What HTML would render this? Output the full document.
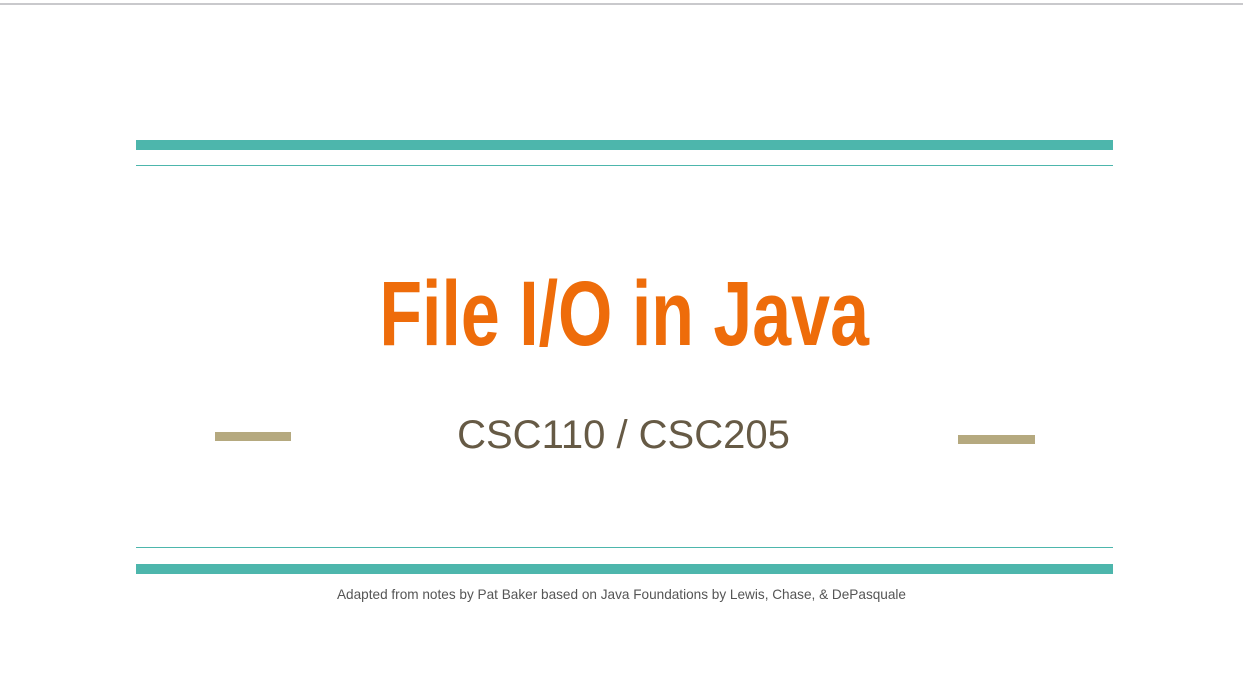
<!DOCTYPE html>
<html><head><meta charset="utf-8"><style>
html,body{margin:0;padding:0;width:1243px;height:699px;background:#fff;overflow:hidden;position:relative;font-family:"Liberation Sans",sans-serif}
div{position:absolute}
.teal{background:#4db6ac}
</style></head><body>
<div style="left:0;top:3px;width:1243px;height:2px;background:#c9c9cc"></div>
<div class="teal" style="left:136px;top:140px;width:977px;height:10px"></div>
<div style="left:136px;top:165px;width:977px;height:0;border-top:1px solid #4db6ac"></div>
<div style="left:136px;top:547px;width:977px;height:0;border-top:1px solid #4db6ac"></div>
<div class="teal" style="left:136px;top:564px;width:977px;height:10px"></div>
<div style="left:215px;top:432px;width:76px;height:9px;background:#b5a97f"></div>
<div style="left:958px;top:435px;width:77px;height:9px;background:#b5a97f"></div>
<div style="left:0;top:259px;width:1243px;text-align:center;">
<span style="display:inline-block;font-weight:bold;font-size:92px;color:#ee6c0a;transform:scaleX(0.76);transform-origin:center;line-height:110px;position:relative;left:3px">File I/O in Java</span></div>
<div style="left:0;top:410px;width:1243px;text-align:center;font-size:40px;color:#665a45;line-height:50px;padding-left:4px;box-sizing:border-box">CSC110 / CSC205</div>
<div style="left:0;top:587px;width:1243px;text-align:center;font-size:13.6px;color:#555;line-height:16px">Adapted from notes by Pat Baker based on Java Foundations by Lewis, Chase, &amp; DePasquale</div>
</body></html>
